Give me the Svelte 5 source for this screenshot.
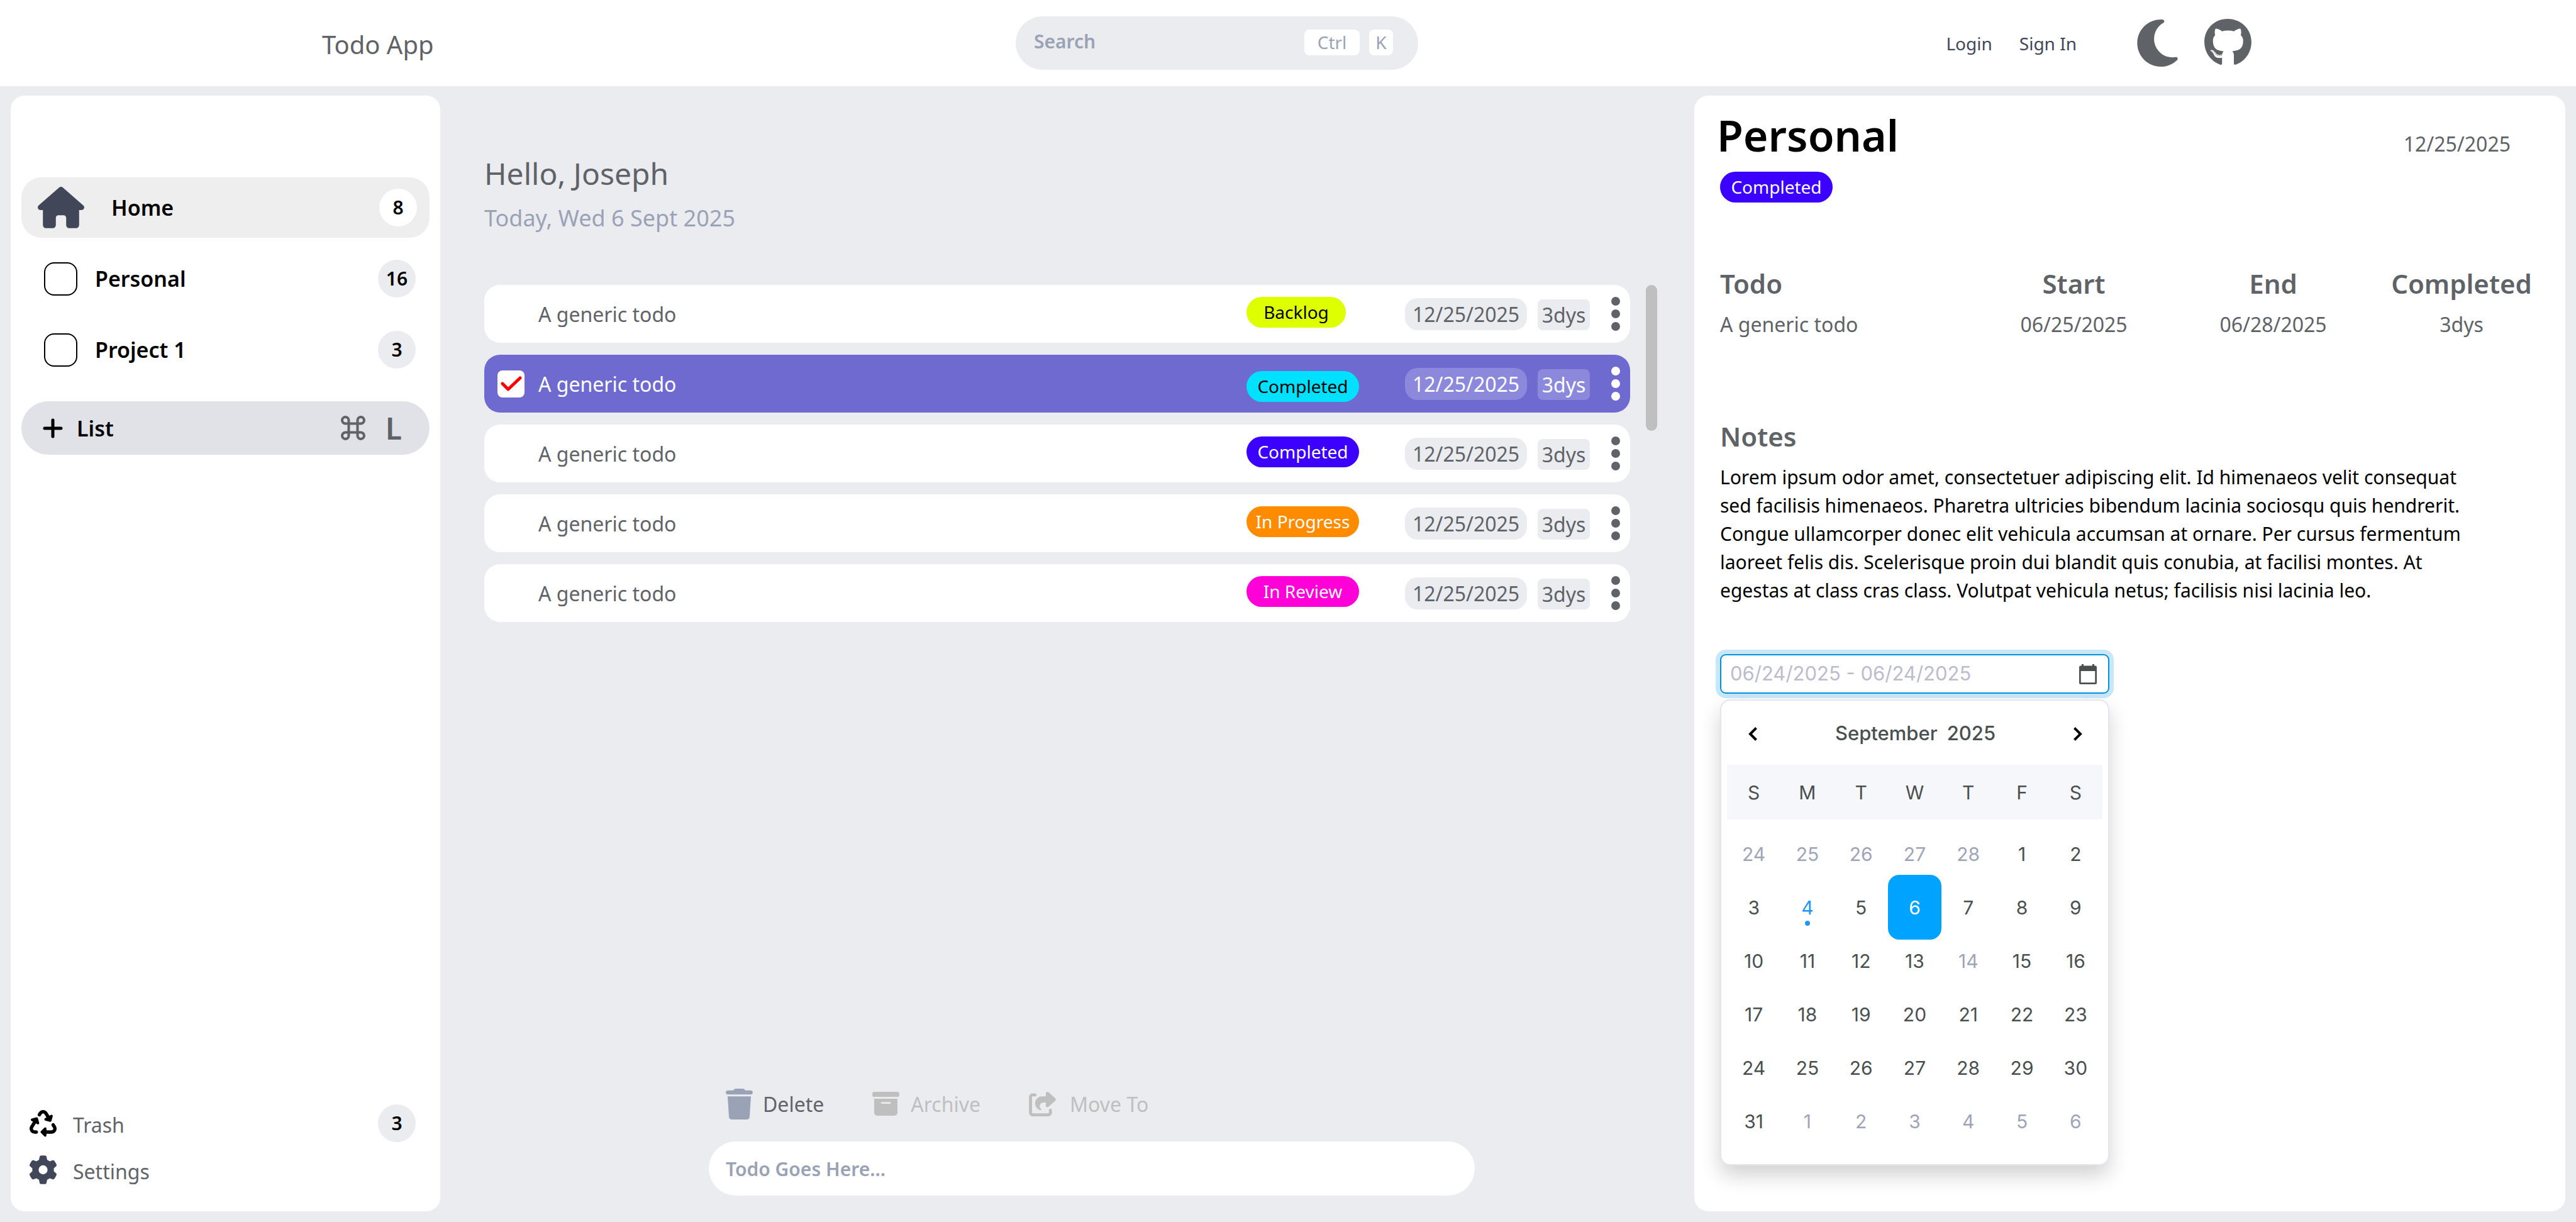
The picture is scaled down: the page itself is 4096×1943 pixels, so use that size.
<script>
  const lists = [
    { id: 'personal', name: 'Personal', count: 16 },
    { id: 'project-1', name: 'Project 1', count: 3 }
  ];

  const todos = [
    { id: 1, title: 'A generic todo', status: 'Backlog', tone: 'lime', date: '12/25/2025', span: '3dys', selected: false },
    { id: 2, title: 'A generic todo', status: 'Completed', tone: 'cyan', date: '12/25/2025', span: '3dys', selected: true },
    { id: 3, title: 'A generic todo', status: 'Completed', tone: 'blue', date: '12/25/2025', span: '3dys', selected: false },
    { id: 4, title: 'A generic todo', status: 'In Progress', tone: 'orange', date: '12/25/2025', span: '3dys', selected: false },
    { id: 5, title: 'A generic todo', status: 'In Review', tone: 'pink', date: '12/25/2025', span: '3dys', selected: false }
  ];

  const weekdays = ['S', 'M', 'T', 'W', 'T', 'F', 'S'];
  const numbers = [
    [24, 25, 26, 27, 28, 1, 2],
    [3, 4, 5, 6, 7, 8, 9],
    [10, 11, 12, 13, 14, 15, 16],
    [17, 18, 19, 20, 21, 22, 23],
    [24, 25, 26, 27, 28, 29, 30],
    [31, 1, 2, 3, 4, 5, 6]
  ];
  const weeks = numbers.map((week, w) =>
    week.map((day, d) => ({
      day,
      muted: (w === 0 && d < 5) || (w === 5 && d > 0) || day === 14,
      today: w === 1 && day === 4,
      picked: w === 1 && day === 6
    }))
  );
</script>

<div class="app">
  <header class="topbar">
    <div class="brand">Todo App</div>
    <div class="search">
      <input type="search" placeholder="Search" aria-label="Search" />
      <kbd>Ctrl</kbd>
      <kbd class="key">K</kbd>
    </div>
    <nav class="account">
      <a href="#login">Login</a>
      <a href="#signin">Sign In</a>
      <button class="moon" aria-label="Dark mode">
        <svg viewBox="0 32 384 448" width="65" height="75"><path d="M223.5 32C100 32 0 132.3 0 256S100 480 223.5 480c60.6 0 115.5-24.2 155.8-63.4c5-4.9 6.3-12.5 3.1-18.7s-10.1-9.7-17-8.5c-9.8 1.7-19.8 2.6-30.1 2.6c-96.9 0-175.5-78.8-175.5-176c0-65.8 36-123.1 89.3-153.3c6.1-3.5 9.2-10.5 7.7-17.3s-7.3-11.9-14.3-12.5c-6.3-.5-12.6-.8-19-.8z" /></svg>
      </button>
      <a class="github" href="#github" aria-label="GitHub">
        <svg viewBox="0 8 496 484" width="75" height="73"><path d="M165.9 397.4c0 2-2.3 3.6-5.2 3.6-3.3.3-5.6-1.3-5.6-3.6 0-2 2.3-3.6 5.2-3.6 3-.3 5.6 1.3 5.6 3.6zm-31.1-4.5c-.7 2 1.3 4.3 4.3 4.9 2.6 1 5.6 0 6.2-2s-1.3-4.3-4.3-5.2c-2.6-.7-5.5.3-6.2 2.3zm44.2-1.7c-2.9.7-4.9 2.6-4.6 4.9.3 2 2.9 3.3 5.9 2.6 2.9-.7 4.9-2.6 4.6-4.6-.3-1.9-3-3.2-5.9-2.9zM244.8 8C106.1 8 0 113.3 0 252c0 110.9 69.8 205.8 169.5 239.2 12.8 2.3 17.3-5.6 17.3-12.1 0-6.2-.3-40.4-.3-61.4 0 0-70 15-84.7-29.8 0 0-11.4-29.1-27.8-36.6 0 0-22.9-15.7 1.6-15.4 0 0 24.9 2 38.6 25.8 21.9 38.6 58.6 27.5 72.9 20.9 2.3-16 8.8-27.1 16-33.7-55.9-6.2-112.3-14.3-112.3-110.5 0-27.5 7.6-41.3 23.6-58.9-2.6-6.5-11.1-33.3 2.6-67.9 20.9-6.5 69 27 69 27 20-5.6 41.5-8.5 62.8-8.5s42.8 2.9 62.8 8.5c0 0 48.1-33.6 69-27 13.7 34.7 5.2 61.4 2.6 67.9 16 17.7 25.8 31.5 25.8 58.9 0 96.5-58.9 104.2-114.8 110.5 9.2 7.9 17 22.9 17 46.4 0 33.7-.3 75.4-.3 83.6 0 6.5 4.6 14.4 17.3 12.1C428.2 457.8 496 362.9 496 252 496 113.3 383.5 8 244.8 8zM97.2 352.9c-1.3 1-1 3.3.7 5.2 1.6 1.6 3.9 2.3 5.2 1 1.3-1 1-3.3-.7-5.2-1.6-1.6-3.9-2.3-5.2-1zm-10.8-8.1c-.7 1.3.3 2.9 2.3 3.9 1.6 1 3.6.7 4.3-.7.7-1.3-.3-2.9-2.3-3.9-2-.6-3.6-.3-4.3.7zm32.4 35.6c-1.6 1.3-1 4.3 1.3 6.2 2.3 2.3 5.2 2.6 6.5 1 1.3-1.3.7-4.3-1.3-6.2-2.2-2.3-5.2-2.6-6.5-1zm-11.4-14.7c-1.6 1-1.6 3.6 0 5.9 1.6 2.3 4.3 3.3 5.6 2.3 1.6-1.3 1.6-3.9 0-6.2-1.4-2.3-4-3.3-5.6-2z" /></svg>
      </a>
    </nav>
  </header>

  <div class="columns">
    <aside class="sidebar">
      <nav class="lists">
        <a class="list-row home" href="#home">
          <svg viewBox="0 1 576 511" width="74" height="66"><path d="M575.8 255.5c0 18-15 32.1-32 32.1h-32l.7 160.2c0 2.7-.2 5.4-.5 8.1V472c0 22.1-17.9 40-40 40H456c-1.1 0-2.2 0-3.3-.1c-1.4 .1-2.8 .1-4.2 .1H416 392c-22.1 0-40-17.9-40-40V448 384c0-17.7-14.3-32-32-32H256c-17.7 0-32 14.3-32 32v64 24c0 22.1-17.9 40-40 40H160 128.1c-1.5 0-3-.1-4.5-.2c-1.2 .1-2.4 .2-3.6 .2H104c-22.1 0-40-17.9-40-40V360c0-.9 0-1.9 .1-2.8V287.6H32c-18 0-32-14-32-32.1c0-9 3-17 10-24L266.4 8c7-7 15-8 22-8s15 2 21 7L564.8 231.5c8 7 12 15 11 24z" /></svg>
          <span class="name">Home</span>
          <span class="count">8</span>
        </a>
        {#each lists as list (list.id)}
          <div class="list-row">
            <input type="checkbox" id={list.id} />
            <label class="name" for={list.id}>{list.name}</label>
            <span class="count">{list.count}</span>
          </div>
        {/each}
      </nav>
      <button class="add-list">
        <svg class="plus" viewBox="0 0 32 32" width="32" height="32"><path d="M16 3v26M3 16h26" /></svg>
        <span class="name">List</span>
        <svg class="command" viewBox="0 0 39 39" width="39" height="39"><path d="M12.500 12.500h14v14h-14zM12.500 12.500H8A5.250 5.250 0 1 1 12.500 7zM26.500 12.500V7A5.250 5.250 0 1 1 31 12.500zM26.500 26.500H31A5.250 5.250 0 1 1 26.500 32zM12.500 26.500V32A5.250 5.250 0 1 1 8 26.500z" /></svg>
        <span class="shortcut">L</span>
      </button>
      <nav class="utilities">
        <a class="utility trash" href="#trash">
          <svg viewBox="0 0 512 512" width="43" height="43"><path d="M174.7 45.1C192.2 17 223 0 256 0s63.8 17 81.3 45.1l38.6 61.7 27-15.6c8.4-4.9 18.9-4.2 26.6 1.7s11.1 15.9 8.6 25.3l-23.4 87.4c-3.4 12.8-16.6 20.4-29.4 17l-87.4-23.4c-9.4-2.5-16.3-10.4-17.6-20s3.400-19.100 11.800-23.900l28.400-16.400L283 79c-5.800-9.300-16-15-27-15s-21.200 5.700-27 15l-17.500 28c-9.200 14.800-28.600 19.500-43.600 10.500c-15.300-9.200-20.200-29.200-10.700-44.400l17.500-28zM429.500 251.900c15-9 34.400-4.300 43.600 10.500l24.400 39.100c9.400 15.100 14.400 32.400 14.600 50.200c.3 53.100-42.700 96.400-95.800 96.400L320 448v32c0 9.700-5.800 18.500-14.800 22.200s-19.300 1.700-26.200-5.200l-64-64c-9.400-9.400-9.400-24.600 0-33.900l64-64c6.900-6.900 17.200-8.900 26.200-5.200s14.800 12.500 14.800 22.200v32l96.200 0c17.600 0 31.900-14.400 31.800-32c0-5.900-1.700-11.700-4.800-16.700l-24.400-39.100c-9.500-15.200-4.700-35.200 10.700-44.400zM64.900 220.900L36 204.200c-8.400-4.900-13.100-14.300-11.800-23.900s8.200-17.500 17.600-20l87.400-23.400c12.800-3.400 26 4.200 29.400 17L182 241.200c2.500 9.400-.9 19.300-8.600 25.300s-18.200 6.600-26.600 1.700l-26.500-15.300L68.800 335.300c-3.100 5-4.800 10.800-4.800 16.700c-.1 17.600 14.200 32 31.800 32l32.200 0c17.700 0 32 14.300 32 32s-14.300 32-32 32l-32.200 0C42.700 448-.3 404.800 0 351.600c.1-17.800 5.100-35.100 14.600-50.200l50.300-80.500z" /></svg>
          <span class="label">Trash</span>
          <span class="count">3</span>
        </a>
        <a class="utility settings" href="#settings">
          <svg viewBox="15 0 482 512" width="43" height="46"><path d="M495.900 166.600c3.200 8.700 .5 18.400-6.400 24.600l-43.300 39.400c1.100 8.300 1.700 16.800 1.700 25.400s-.6 17.100-1.700 25.400l43.300 39.400c6.900 6.200 9.600 15.900 6.400 24.600c-4.400 11.900-9.700 23.300-15.800 34.300l-4.700 8.100c-6.600 11-14 21.400-22.100 31.200c-5.900 7.200-15.700 9.600-24.500 6.800l-55.700-17.700c-13.400 10.300-28.200 18.900-44 25.400l-12.500 57.100c-2 9.100-9 16.300-18.200 17.800c-13.800 2.300-28 3.500-42.500 3.500s-28.700-1.200-42.500-3.500c-9.200-1.500-16.200-8.700-18.200-17.800l-12.500-57.100c-15.800-6.500-30.600-15.100-44-25.400L83.100 425.900c-8.800 2.800-18.600 .3-24.500-6.800c-8.100-9.800-15.500-20.200-22.100-31.200l-4.700-8.100c-6.100-11-11.400-22.400-15.800-34.300c-3.200-8.700-.5-18.400 6.400-24.600l43.300-39.400C64.600 273.100 64 264.600 64 256s.6-17.100 1.700-25.400L22.400 191.200c-6.900-6.200-9.600-15.900-6.400-24.600c4.400-11.900 9.700-23.300 15.800-34.300l4.700-8.100c6.600-11 14-21.400 22.100-31.200c5.900-7.200 15.700-9.600 24.500-6.800l55.700 17.700c13.400-10.300 28.200-18.900 44-25.400l12.500-57.100c2-9.100 9-16.300 18.200-17.800C227.300 1.200 241.500 0 256 0s28.700 1.200 42.500 3.500c9.200 1.500 16.200 8.700 18.200 17.800l12.500 57.100c15.800 6.500 30.600 15.100 44 25.400l55.700-17.700c8.800-2.800 18.600-.3 24.500 6.800c8.100 9.800 15.500 20.200 22.100 31.200l4.700 8.100c6.100 11 11.400 22.400 15.800 34.300zM256 336a80 80 0 1 0 0-160 80 80 0 1 0 0 160z" /></svg>
          <span class="label">Settings</span>
        </a>
      </nav>
    </aside>

    <main class="board">
      <h1>Hello, Joseph</h1>
      <p class="today-line">Today, Wed 6 Sept 2025</p>

      <div class="scroller">
        <ul class="todos">
          {#each todos as todo (todo.id)}
            <li class:selected={todo.selected}>
              <input type="checkbox" id={`todo-${todo.id}`} checked={todo.selected} />
              <svg class="tick" viewBox="0 0 34 24" width="34" height="24"><path d="M3 12l9 9L31 3" /></svg>
              <label class="title" for={`todo-${todo.id}`}>{todo.title}</label>
              <span class="status"><span class="tag {todo.tone}">{todo.status}</span></span>
              <span class="chip date">{todo.date}</span>
              <span class="chip span">{todo.span}</span>
              <button class="more" aria-label="More">
                <svg viewBox="0 0 14 54" width="14" height="54"><circle cx="7" cy="7" r="7" /><circle cx="7" cy="27" r="7" /><circle cx="7" cy="47" r="7" /></svg>
              </button>
            </li>
          {/each}
        </ul>
        <div class="thumb"></div>
      </div>

      <div class="composer">
        <div class="actions">
          <button class="delete">
            <svg viewBox="0 0 180 206" width="43" height="49"><path d="M14 12H50Q56 0 64 0H116Q124 0 130 12H166Q180 14 180 25.500Q180 38 166 39H14Q0 38 0 25.500Q0 14 14 12zM12 51H168L159 188Q158 206 140 206H40Q22 206 21 188z" /></svg>
            Delete
          </button>
          <button>
            <svg viewBox="0 0 180 160" width="43" height="38"><path fill-rule="evenodd" d="M12 0H168Q180 0 180 12V22Q180 34 168 34H12Q0 34 0 22V12Q0 0 12 0zM12 46H168V137Q168 160 145 160H35Q12 160 12 137zM63 68a6 6 0 0 0 0 12H118a6 6 0 0 0 0-12z" /></svg>
            Archive
          </button>
          <button>
            <svg viewBox="0 0 614 512" width="47" height="39"><path d="M352 224H305.500c-45 0-81.500 36.500-81.500 81.500c0 22.300 10.300 34.300 19.200 40.500c6.800 4.700 12.800 12 12.800 20.300c0 9.800-8 17.800-17.800 17.800h-2.500c-2.400 0-4.800-.4-7.100-1.400C210.800 374.800 128 333.400 128 240c0-79.500 64.500-144 144-144h80V34.700C352 15.500 367.500 0 386.700 0c8.600 0 16.800 3.200 23.200 8.900L548.100 133.300c7.600 6.800 11.900 16.500 11.900 26.700s-4.300 19.900-11.900 26.700l-139 125.100c-5.900 5.300-13.500 8.200-21.400 8.200H384c-17.700 0-32-14.300-32-32V224zM80 96c-8.800 0-16 7.200-16 16V432c0 8.800 7.200 16 16 16H400c8.800 0 16-7.200 16-16V384c0-17.700 14.300-32 32-32s32 14.300 32 32v48c0 44.200-35.800 80-80 80H80c-44.200 0-80-35.800-80-80V112C0 67.800 35.800 32 80 32h48c17.700 0 32 14.300 32 32s-14.300 32-32 32H80z" /></svg>
            Move To
          </button>
        </div>
        <input class="new-todo" type="text" placeholder="Todo Goes Here..." aria-label="New todo" />
      </div>
    </main>

    <section class="details">
      <div class="details-head">
        <h2>Personal</h2>
        <time>12/25/2025</time>
      </div>
      <span class="tag blue details-tag">Completed</span>

      <table class="summary">
        <thead>
          <tr><th>Todo</th><th>Start</th><th>End</th><th>Completed</th></tr>
        </thead>
        <tbody>
          <tr><td>A generic todo</td><td>06/25/2025</td><td>06/28/2025</td><td>3dys</td></tr>
        </tbody>
      </table>

      <h3>Notes</h3>
      <p class="notes">
        Lorem ipsum odor amet, consectetuer adipiscing elit. Id himenaeos velit consequat sed facilisis
        himenaeos. Pharetra ultricies bibendum lacinia sociosqu quis hendrerit. Congue ullamcorper donec
        elit vehicula accumsan at ornare. Per cursus fermentum laoreet felis dis. Scelerisque proin dui
        blandit quis conubia, at facilisi montes. At egestas at class cras class. Volutpat vehicula
        netus; facilisis nisi lacinia leo.
      </p>

      <div class="picker">
        <div class="field">
          <input type="text" placeholder="06/24/2025 - 06/24/2025" aria-label="Date range" />
          <svg viewBox="0 0 28 32" width="28" height="32"><path fill-rule="evenodd" d="M4 0H7V2.500H21V0H24V2.500H25.500Q28 2.500 28 5V29.500Q28 32 25.500 32H2.500Q0 32 0 29.500V5Q0 2.500 2.500 2.500H4zM2.700 11V29.300H25.300V11z" /></svg>
        </div>
        <div class="calendar">
          <div class="month">
            <button aria-label="Previous month"><svg viewBox="0 0 14 22" width="14" height="22"><path d="M12.500 1.500L3 11l9.500 9.500" /></svg></button>
            <div class="month-name"><span>September</span><span>2025</span></div>
            <button aria-label="Next month"><svg viewBox="0 0 14 22" width="14" height="22"><path d="M1.500 1.500L11 11l-9.500 9.500" /></svg></button>
          </div>
          <table class="days">
            <thead>
              <tr>
                {#each weekdays as name}<th>{name}</th>{/each}
              </tr>
            </thead>
            <tbody>
              {#each weeks as week}
                <tr>
                  {#each week as cell}
                    <td><button class:muted={cell.muted} class:today={cell.today} class:picked={cell.picked}>{cell.day}</button></td>
                  {/each}
                </tr>
              {/each}
            </tbody>
          </table>
        </div>
      </div>
    </section>
  </div>
</div>

<style>
  :global(body) {
    margin: 0;
    background: #ebecf0;
  }

  .app {
    --ink: #5f6368;
    --slate: #414758;
    --haze: #9aa2b5;
    --panel: #ebecf0;
    display: flex;
    flex-direction: column;
    min-height: 100vh;
    box-sizing: border-box;
    font-family: 'Noto Sans', 'Open Sans', sans-serif;
    font-size: 32px;
    color: var(--ink);
    background: var(--panel);
  }

  .app *,
  .app *::before {
    box-sizing: border-box;
  }

  h1, h2, h3, p, ul {
    margin: 0;
    padding: 0;
  }

  svg {
    display: block;
    flex: none;
    fill: currentColor;
  }

  a {
    color: inherit;
    text-decoration: none;
  }

  button {
    margin: 0;
    padding: 0;
    border: 0;
    background: none;
    font: inherit;
    color: inherit;
  }

  input {
    margin: 0;
    padding: 0;
    border: 0;
    outline: 0;
    background: none;
    font: inherit;
    color: inherit;
    min-width: 0;
  }

  input::placeholder {
    color: inherit;
    opacity: 1;
  }

  /* Top bar */
  .topbar {
    display: grid;
    grid-template-columns: 1615fr 640fr 1841fr;
    align-items: center;
    height: 137px;
    background: #fff;
  }

  .brand {
    padding: 4px 0 0 512px;
    font-size: 40px;
  }

  .search {
    display: flex;
    align-items: center;
    min-width: 0;
    height: 85px;
    padding: 0 40px 2px 29px;
    border-radius: 43px;
    background: var(--panel);
    color: var(--haze);
    font-size: 28px;
  }

  .search input {
    flex: 1;
    padding-bottom: 4px;
    font-size: 30px;
    font-weight: 600;
  }

  kbd {
    flex: none;
    width: 88px;
    height: 41px;
    margin-left: 15px;
    border-radius: 8px;
    background: #fff;
    font-family: inherit;
    line-height: 40px;
    text-align: center;
  }

  kbd.key {
    width: 38px;
  }

  .account {
    display: flex;
    justify-content: flex-end;
    align-items: center;
    padding-right: 516px;
    font-size: 28px;
    color: var(--slate);
  }

  .account a + a {
    margin-left: 43px;
  }

  .moon {
    margin: 0 0 0 96px;
    color: var(--ink);
  }

  .github {
    margin-left: 42px;
    padding-bottom: 4px;
    color: var(--ink);
  }

  /* Page columns */
  .columns {
    flex: 1;
    display: grid;
    grid-template-columns: 683fr 1994fr 1385fr;
    padding: 15px 17px 17px;
  }

  .sidebar,
  .details {
    border-radius: 22px;
    background: #fff;
  }

  /* Sidebar */
  .sidebar {
    display: flex;
    flex-direction: column;
    padding: 130px 17px 43px;
    color: #000;
  }

  .lists {
    display: flex;
    flex-direction: column;
    gap: 17px;
  }

  .list-row {
    display: flex;
    align-items: center;
    height: 96px;
    padding: 0 22px 0 36px;
    border-radius: 32px;
  }

  .list-row.home {
    padding: 0 20px 0 26px;
    background: #eee;
  }

  .list-row svg {
    color: var(--slate);
  }

  .name {
    flex: 1;
    padding-left: 28px;
    font-size: 34px;
    font-weight: 600;
    text-align: left;
  }

  .home .name {
    padding-left: 43px;
  }

  .list-row input {
    appearance: none;
    width: 53px;
    height: 53px;
    border: 2px solid #000;
    border-radius: 16px;
  }

  .count {
    width: 60px;
    height: 60px;
    border-radius: 30px;
    background: var(--panel);
    font-size: 30px;
    font-weight: 600;
    line-height: 60px;
    text-align: center;
  }

  .home .count {
    background: #fff;
  }

  .add-list {
    display: flex;
    align-items: center;
    height: 85px;
    margin-top: 34px;
    padding: 0 44px 0 34px;
    border-radius: 43px;
    background: #e1e2e8;
  }

  .add-list .name {
    padding-left: 22px;
  }

  .plus {
    fill: none;
    stroke: #000;
    stroke-width: 5;
    stroke-linecap: round;
  }

  .command {
    fill: none;
    stroke: var(--ink);
    stroke-width: 4;
  }

  .shortcut {
    padding-left: 32px;
    font-size: 48px;
    font-weight: 600;
    line-height: 60px;
    color: var(--ink);
  }

  .utilities {
    display: flex;
    flex-direction: column;
    gap: 21px;
    margin-top: auto;
  }

  .utility {
    display: flex;
    align-items: center;
    height: 60px;
    padding: 0 22px 0 13px;
  }

  .utility.settings {
    height: 46px;
  }

  .utility .label {
    flex: 1;
    padding: 4px 0 0 26px;
    color: var(--ink);
  }

  .settings {
    color: var(--slate);
  }

  /* Board */
  .board {
    display: flex;
    flex-direction: column;
    padding: 94px 59px 25px 70px;
  }

  h1 {
    font-size: 48px;
    font-weight: 400;
    line-height: 60px;
  }

  .today-line {
    margin-top: 17px;
    font-size: 36px;
    line-height: 48px;
    color: var(--haze);
  }

  .scroller {
    display: flex;
    gap: 25px;
    margin-top: 82px;
  }

  .todos {
    flex: 1;
    display: flex;
    flex-direction: column;
    gap: 19px;
    list-style: none;
  }

  .thumb {
    width: 18px;
    height: 232px;
    border-radius: 9px;
    background: #bfbfbf;
  }

  .todos li {
    position: relative;
    display: flex;
    align-items: center;
    height: 92px;
    padding: 0 16px 0 21px;
    border-radius: 25px;
    background: #fff;
  }

  .todos li input {
    appearance: none;
    width: 43px;
    height: 43px;
    border-radius: 8px;
  }

  .tick {
    display: none;
    position: absolute;
    left: 26px;
    fill: none;
    stroke: #f00;
    stroke-width: 5;
    stroke-linecap: round;
    stroke-linejoin: round;
  }

  .title {
    flex: 1;
    padding-left: 22px;
  }

  .status {
    align-self: stretch;
    display: flex;
    align-items: flex-start;
    width: 179px;
    padding: 19px 0 17px;
  }

  .tag {
    width: 179px;
    height: 49px;
    border-radius: 25px;
    font-size: 28px;
    line-height: 48px;
    text-align: center;
    color: #fff;
  }

  .lime {
    width: 158px;
    background: #deff00;
    color: #000;
  }

  .cyan {
    background: #00e1ff;
    color: #000;
  }

  .blue {
    background: #3c00ff;
  }

  .orange {
    background: #ff8c00;
  }

  .pink {
    background: #ff00d9;
  }

  .chip {
    background: var(--panel);
    text-align: center;
  }

  .chip.date {
    width: 194px;
    height: 51px;
    margin-left: 73px;
    border-radius: 20px;
    line-height: 51px;
  }

  .chip.span {
    width: 83px;
    height: 49px;
    margin: 2px 34px 0 17px;
    border-radius: 8px;
    line-height: 49px;
  }

  .selected {
    color: #fff;
  }

  .todos li.selected {
    background: #6f6ad0;
  }

  .selected input {
    background: #fff;
  }

  .selected .tick {
    display: block;
  }

  .selected .status {
    align-items: flex-end;
  }

  .selected .chip {
    background: #8c88db;
  }

  .composer {
    margin: auto 290px 0 357px;
  }

  .actions {
    display: flex;
    gap: 77px;
    padding: 0 27px;
    color: #bfbfbf;
  }

  .actions button {
    display: flex;
    align-items: center;
    gap: 18px;
    height: 50px;
  }

  .actions .delete {
    gap: 16px;
    color: var(--ink);
  }

  .delete svg {
    color: var(--haze);
  }

  .new-todo {
    display: block;
    width: 100%;
    height: 86px;
    margin-top: 35px;
    padding: 0 27px;
    border-radius: 43px;
    background: #fff;
    font-size: 30px;
    font-weight: 600;
    color: var(--haze);
  }

  /* Details */
  .details {
    padding: 23px 24px 72px 41px;
  }

  .details-head {
    display: flex;
    align-items: baseline;
    justify-content: space-between;
    margin-left: -5px;
    padding-right: 63px;
  }

  h2 {
    font-size: 68px;
    font-weight: 600;
    line-height: 80px;
    color: #000;
  }

  .details-tag {
    display: block;
    margin-top: 18px;
  }

  .summary {
    width: 100%;
    margin-top: 101px;
    border-collapse: collapse;
    table-layout: fixed;
  }

  .summary th,
  .summary td {
    width: 317px;
    padding: 0;
    line-height: 48px;
  }

  .summary th {
    padding-bottom: 13px;
    font-size: 42px;
    font-weight: 600;
    line-height: 56px;
  }

  .summary td {
    text-align: center;
  }

  .summary th:first-child,
  .summary td:first-child {
    width: 404px;
    text-align: left;
  }

  .summary th:last-child {
    width: auto;
  }

  h3 {
    margin-top: 126px;
    font-size: 42px;
    font-weight: 600;
    line-height: 56px;
  }

  .notes {
    max-width: 1200px;
    margin-top: 14px;
    font-size: 30px;
    line-height: 45px;
    color: #000;
  }

  /* Date picker */
  .picker {
    width: 619px;
    margin-top: 79px;
    font-family: Inter, 'Open Sans', sans-serif;
    font-size: 30px;
    color: #4a4f50;
  }

  .field {
    display: flex;
    align-items: center;
    height: 63px;
    padding: 0 18px 0 14px;
    border: 2px solid #0090e0;
    border-radius: 9px;
    box-shadow: 0 0 0 7px #c8e7f9;
  }

  .field input {
    flex: 1;
    padding-bottom: 2px;
    font-size: 31px;
    color: #bcbccc;
  }

  .calendar {
    margin-top: 9px;
    padding: 0 9px 26px;
    border: 2px solid #e4e5ef;
    border-radius: 16px;
    background: #fff;
    box-shadow: 0 16px 32px rgba(0, 0, 0, 0.18);
  }

  .month {
    display: flex;
    align-items: center;
    justify-content: space-between;
    height: 102px;
    padding: 4px 32px 0 34px;
  }

  .month svg {
    fill: none;
    stroke: #000;
    stroke-width: 4;
  }

  .month-name {
    display: flex;
    gap: 15px;
    padding-bottom: 4px;
    font-size: 31px;
    font-weight: 500;
  }

  .days {
    width: 100%;
    border-collapse: collapse;
    table-layout: fixed;
  }

  .days th {
    height: 87px;
    padding: 0;
    background: #f5f7fb;
    font-weight: 400;
  }

  .days tbody::before {
    content: '';
    display: block;
    height: 12px;
  }

  .days td {
    height: 85px;
    padding: 0;
  }

  .days button {
    position: relative;
    display: block;
    width: 100%;
    height: 85px;
  }

  .days .muted {
    color: #a0a4b8;
  }

  .days .today {
    color: #2196f3;
  }

  .days .today::after {
    content: '';
    position: absolute;
    left: calc(50% - 4px);
    bottom: 13px;
    width: 8px;
    height: 8px;
    border-radius: 4px;
    background: #2196f3;
  }

  .days .picked {
    height: 103px;
    margin: -9px 0;
    border-radius: 18px;
    background: #00a3ff;
    color: #fff;
  }
</style>
